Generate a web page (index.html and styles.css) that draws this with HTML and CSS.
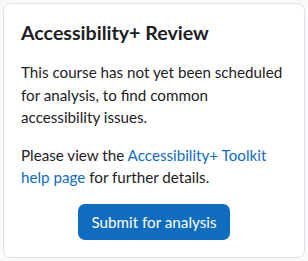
FILE: index.html
```html
<!DOCTYPE html>
<html lang="en">
<head>
    <meta charset="UTF-8">
    <title>Accessibility+ Review</title>
    <link rel="stylesheet" href="styles.css">
</head>
<body>
    <section class="card">
        <h2 class="card-title">Accessibility+ Review</h2>
        <p>This course has not yet been scheduled for analysis, to find common accessibility issues.</p>
        <p>Please view the <a href="#">Accessibility+ Toolkit help page</a> for further details.</p>
        <div class="actions">
            <button class="btn">Submit for analysis</button>
        </div>
    </section>
</body>
</html>
```
FILE: styles.css
```css
*{margin:0; padding:0; box-sizing:border-box;}
body{background-color:#f8f9fa; padding:3px; font-family:Lato,"Liberation Sans",sans-serif; font-size:15.2px; line-height:22.5px; color:#1d2125;}
.card{background-color:#FFF; border:1px solid #dee2e6; border-radius:8px; height:255px; padding:17px 15px 17px 17px;}
.card-title{font-size:19.6px; font-weight:700; line-height:24px; margin-bottom:16px;}
.card p{margin-bottom:15px;}
.card a{color:#0f6cbf; text-decoration:none;}
.actions{text-align:center; padding-right:2px;}
.btn{font-family:inherit; font-size:15.2px; line-height:22px; padding:7px 14px; background-color:#0f6cbf; color:#FFF; border:none; border-radius:7px;}
```
